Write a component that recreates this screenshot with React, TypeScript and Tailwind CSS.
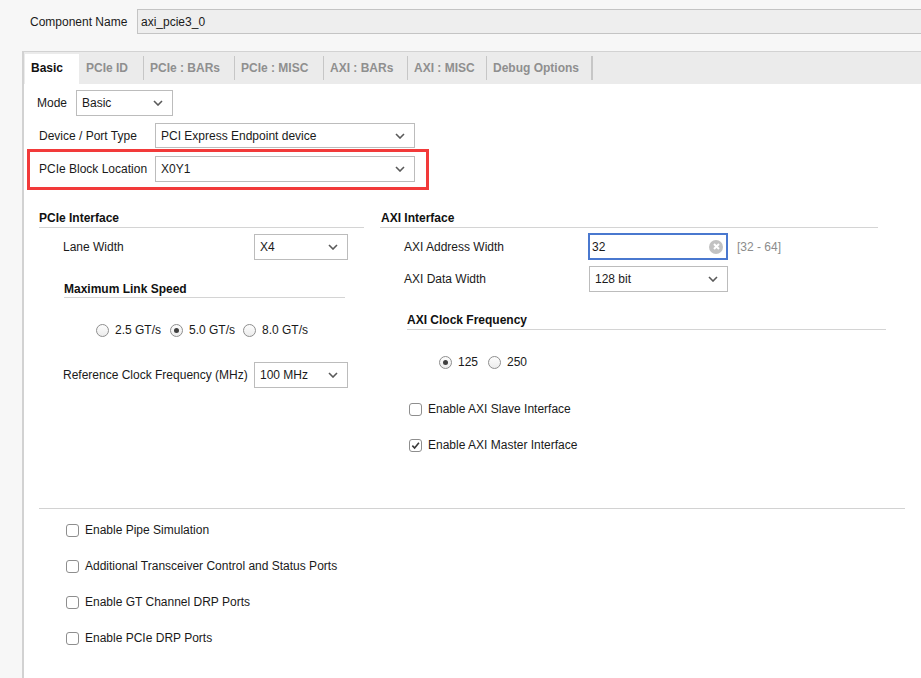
import React from "react";

const FONT = { fontFamily: '"Liberation Sans", Arial, sans-serif' };

function Chevron() {
  return (
    <svg width="10" height="6" viewBox="0 0 10 6" className="shrink-0">
      <polyline points="1,1 5,5 9,1" fill="none" stroke="#5a5a5a" strokeWidth="1.6" />
    </svg>
  );
}

function Select({ value, w, h = "h-[26px]" }: { value: string; w: string; h?: string }) {
  return (
    <div className={`${w} ${h} flex items-center justify-between bg-white border border-[#bcbcbc] pl-[5px] pr-[9px] text-[12px] text-[#1a1a1a]`}>
      <span>{value}</span>
      <Chevron />
    </div>
  );
}

function Radio({ checked }: { checked?: boolean }) {
  return (
    <span className="w-[13px] h-[13px] rounded-full border border-[#8e8e8e] bg-gradient-to-b from-[#fdfdfd] to-[#ececec] flex items-center justify-center shrink-0">
      {checked && <span className="w-[5px] h-[5px] rounded-full bg-[#3f3f3f]" />}
    </span>
  );
}

function Check({ checked, label }: { checked?: boolean; label: string }) {
  return (
    <div className="flex items-center h-[16px] text-[12px] text-[#1a1a1a]">
      <span className="w-[13px] h-[13px] rounded-[3px] border border-[#8e8e8e] bg-white flex items-center justify-center shrink-0">
        {checked && (
          <svg width="9" height="9" viewBox="0 0 10 10">
            <polyline points="1.5,5.2 4,7.8 8.8,2" fill="none" stroke="#3a3a3a" strokeWidth="1.8" />
          </svg>
        )}
      </span>
      <span className="ml-[6px]">{label}</span>
    </div>
  );
}

function Heading({ text, w, h }: { text: string; w: string; h: string }) {
  return (
    <div className={`${w} ${h} pt-[1px] border-b border-[#d4d4d4] text-[12px] font-bold text-[#111] leading-[16px]`}>
      {text}
    </div>
  );
}

const TABS = [
  { name: "PCIe ID", w: "w-[65px]", pl: "pl-[7px]" },
  { name: "PCIe : BARs", w: "w-[91px]", pl: "pl-[6px]" },
  { name: "PCIe : MISC", w: "w-[89px]", pl: "pl-[6px]" },
  { name: "AXI : BARs", w: "w-[84px]", pl: "pl-[6px]" },
  { name: "AXI : MISC", w: "w-[79px]", pl: "pl-[6px]" },
  { name: "Debug Options", w: "w-[106px]", pl: "pl-[6px]" },
];

export default function App() {
  return (
    <div className="w-[921px] h-[678px] bg-[#f7f7f7] overflow-hidden flex flex-col" style={FONT}>
      {/* component name */}
      <div className="flex items-center pt-[9px] h-[34px] shrink-0">
        <span className="pl-[30px] w-[137px] text-[12px] text-[#1a1a1a]">Component Name</span>
        <div className="flex-1 h-[25px] bg-[#eeeeee] border border-[#c4c4c4] border-r-0 flex items-center pl-[3px] text-[12px] text-[#1a1a1a]">
          axi_pcie3_0
        </div>
      </div>

      {/* panel */}
      <div className="mt-[17px] ml-[22px] flex-1 border-l-2 border-t border-[#d2d2d2] bg-white flex flex-col">
        {/* tabs */}
        <div className="h-[32px] bg-[#ebebeb] flex items-end shrink-0">
          <div className="ml-[1px] w-[54px] h-[30px] bg-white pl-[6px] pb-[2px] flex items-center text-[12px] font-bold text-[#111]">
            Basic
          </div>
          {TABS.map((t, i) => (
            <div key={t.name} className={`${t.w} h-[30px] flex items-center justify-between`}>
              <span className={`${t.pl} pb-[2px] text-[12px] font-bold text-[#8f8f8f]`}>{t.name}</span>
              <span className={`${i === TABS.length - 1 ? "w-[2px]" : "w-[1px]"} h-[24px] bg-[#c6c6c6] mb-[3px]`} />
            </div>
          ))}
        </div>

        {/* mode */}
        <div className="mt-[6px] h-[26px] flex items-center text-[12px] text-[#1a1a1a]">
          <span className="pl-[13px] w-[52px]">Mode</span>
          <Select value="Basic" w="w-[97px]" />
        </div>

        {/* device / port type */}
        <div className="mt-[7px] h-[25px] flex items-center text-[12px] text-[#1a1a1a]">
          <span className="pl-[15px] w-[131px]">Device / Port Type</span>
          <Select value="PCI Express Endpoint device" w="w-[260px]" h="h-[25px]" />
        </div>

        {/* highlighted block location */}
        <div className="mt-[1px] ml-[3px] w-[402px] h-[41px] border-[3px] border-[#f23a3a] pl-[9px] pt-[4px]">
          <div className="h-[26px] flex items-center text-[12px] text-[#1a1a1a]">
            <span className="w-[116px]">PCIe Block Location</span>
            <Select value="X0Y1" w="w-[260px]" />
          </div>
        </div>

        {/* two columns */}
        <div className="mt-[19px] ml-[15px] flex gap-[16px]">
          {/* PCIe Interface */}
          <div className="w-[325px] flex flex-col">
            <Heading text="PCIe Interface" w="w-[325px]" h="h-[19px]" />
            <div className="mt-[6px] h-[26px] flex items-center text-[12px] text-[#1a1a1a]">
              <span className="pl-[24px] w-[215px]">Lane Width</span>
              <Select value="X4" w="w-[94px]" />
            </div>
            <div className="mt-[20px] ml-[25px]">
              <Heading text="Maximum Link Speed" w="w-[281px]" h="h-[18px]" />
            </div>
            <div className="mt-[24px] ml-[57px] h-[16px] flex items-center text-[12px] text-[#1a1a1a]">
              <div className="w-[74px] flex items-center"><Radio /><span className="ml-[6px]">2.5 GT/s</span></div>
              <div className="w-[73px] flex items-center"><Radio checked /><span className="ml-[6px]">5.0 GT/s</span></div>
              <div className="flex items-center"><Radio /><span className="ml-[6px]">8.0 GT/s</span></div>
            </div>
            <div className="mt-[24px] h-[26px] flex items-center text-[12px] text-[#1a1a1a]">
              <span className="pl-[24px] w-[215px]">Reference Clock Frequency (MHz)</span>
              <Select value="100 MHz" w="w-[94px]" />
            </div>
          </div>

          {/* AXI Interface */}
          <div className="w-[506px] flex flex-col">
            <div className="pl-[1px] pt-[1px] w-[498px] h-[19px] border-b border-[#d4d4d4] text-[12px] font-bold text-[#111] leading-[16px]">
              AXI Interface
            </div>
            <div className="mt-[5px] h-[27px] flex items-center text-[12px] text-[#1a1a1a]">
              <span className="pl-[24px] w-[208px]">AXI Address Width</span>
              <div className="w-[140px] h-[27px] border-2 border-[#4a78cf] bg-white flex items-center justify-between pl-[2px] pr-[3px]">
                <span>32</span>
                <span className="w-[14px] h-[14px] rounded-full bg-[#c2c2c2] flex items-center justify-center">
                  <svg width="7" height="7" viewBox="0 0 7 7">
                    <path d="M1 1 L6 6 M6 1 L1 6" stroke="#fff" strokeWidth="2" />
                  </svg>
                </span>
              </div>
              <span className="ml-[9px] text-[#8c8c8c]">[32 - 64]</span>
            </div>
            <div className="mt-[6px] h-[26px] flex items-center text-[12px] text-[#1a1a1a]">
              <span className="pl-[24px] w-[209px]">AXI Data Width</span>
              <Select value="128 bit" w="w-[139px]" />
            </div>
            <div className="mt-[19px] ml-[27px]">
              <Heading text="AXI Clock Frequency" w="w-[479px]" h="h-[19px]" />
            </div>
            <div className="mt-[24px] ml-[59px] h-[16px] flex items-center text-[12px] text-[#1a1a1a]">
              <div className="w-[49px] flex items-center"><Radio checked /><span className="ml-[6px]">125</span></div>
              <div className="flex items-center"><Radio /><span className="ml-[6px]">250</span></div>
            </div>
            <div className="mt-[31px] ml-[29px]">
              <Check label="Enable AXI Slave Interface" />
            </div>
            <div className="mt-[20px] ml-[29px]">
              <Check checked label="Enable AXI Master Interface" />
            </div>
          </div>
        </div>

        <div className="mt-[55px] ml-[15px] w-[866px] h-[1px] bg-[#d2d2d2]" />

        <div className="ml-[42px] flex flex-col">
          <div className="mt-[13px]"><Check label="Enable Pipe Simulation" /></div>
          <div className="mt-[20px]"><Check label="Additional Transceiver Control and Status Ports" /></div>
          <div className="mt-[20px]"><Check label="Enable GT Channel DRP Ports" /></div>
          <div className="mt-[20px]"><Check label="Enable PCIe DRP Ports" /></div>
        </div>
      </div>
    </div>
  );
}
